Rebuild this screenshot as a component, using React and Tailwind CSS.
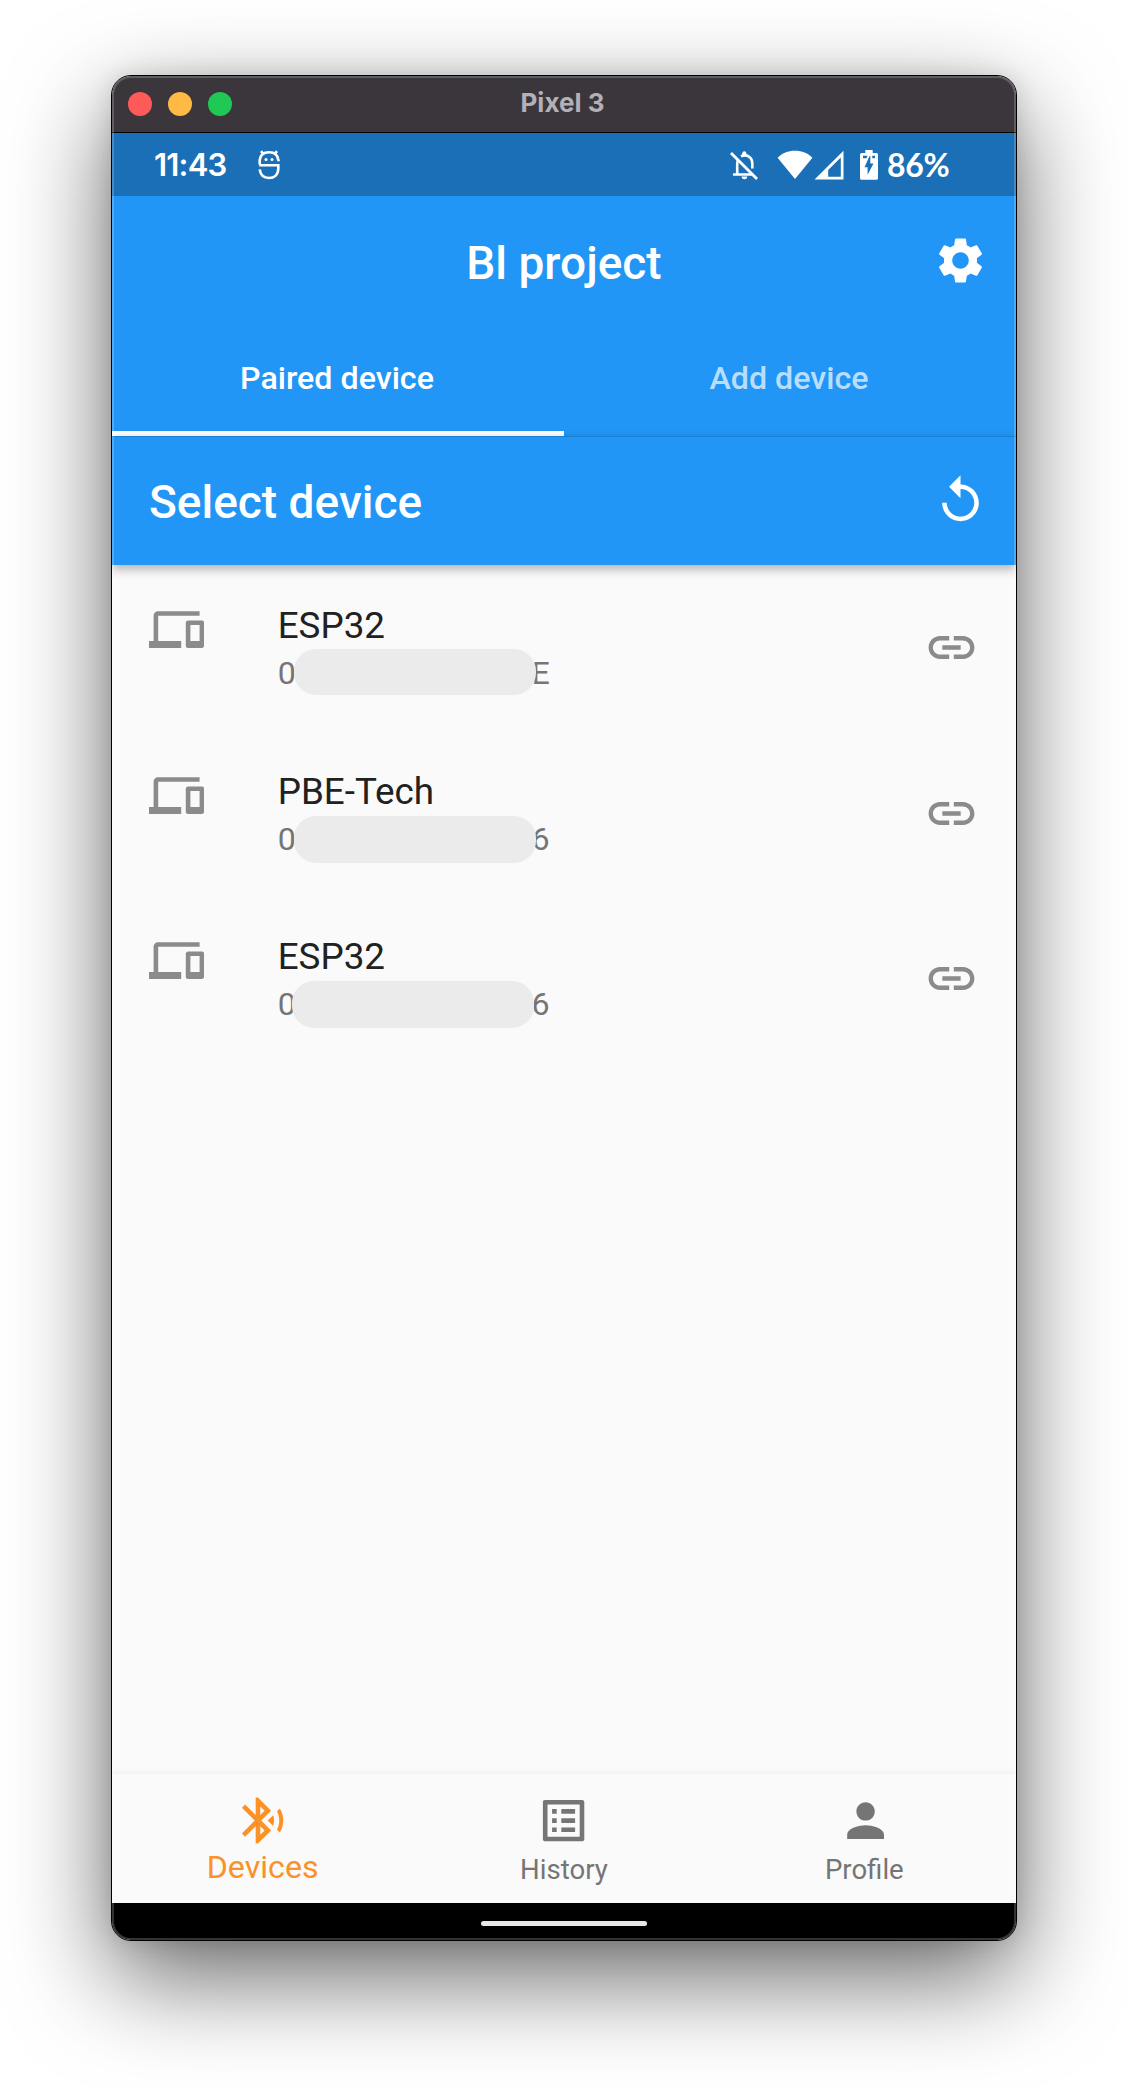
import React from "react";
import {
  MdSettings,
  MdReplay,
  MdDevices,
  MdLink,
  MdBluetoothSearching,
  MdListAlt,
  MdPerson,
} from "react-icons/md";

const devices = [
  { name: "ESP32", first: "0", last: "E", mask: "left-[16.5px] top-[1px] h-[46px]" },
  { name: "PBE-Tech", first: "0", last: "6", mask: "left-[16.5px] top-[2.5px] h-[46.5px]" },
  { name: "ESP32", first: "0", last: "6", mask: "left-[14.5px] top-[2px] h-[46.5px]" },
];

function FaceIcon() {
  return (
    <svg className="ml-8 h-[30px] w-[22px]" viewBox="0 0 22 30" fill="none" stroke="white" strokeWidth="2.6">
      <path d="M1.7 14.5V10Q2.5 2.3 11 2.2T20.3 10M3 1.2l2.5 3M19 1.2l-2.5 3M1.2 15.3H20.3V19C20 25 16 28 11 28S2.5 25 1.7 19.4" />
      <path d="M20.5 9.5v1.8" />
      <circle cx="8" cy="9.6" r="1.5" fill="white" stroke="none" />
      <circle cx="14" cy="9.6" r="1.5" fill="white" stroke="none" />
    </svg>
  );
}

function BellOffIcon() {
  return (
    <svg className="h-[30px] w-[30px]" viewBox="0 0 30 30" fill="none" stroke="white" strokeWidth="2.6">
      <path d="M2 3L28 29" strokeWidth="2.8" />
      <path d="M4 24.5H23.5M8.2 24V14c0-1.8.3-3 .9-4.2M12 6.3c6-2.6 11.3 1.2 11.3 7.2V18.5" />
      <path d="M13.3 5V3.3a2 2 0 0 1 4 0V5z" fill="white" stroke="none" />
      <path d="M12.6 26.5h5.6a2.8 2.8 0 0 1-5.6 0z" fill="white" stroke="none" />
    </svg>
  );
}

function WifiIcon() {
  return (
    <svg className="ml-[18px] h-[30px] w-[36px]" viewBox="0 0 36 30" fill="white">
      <path d="M18 29L.6 7.8C5 3.4 11 .8 18 .8s13 2.6 17.400 7z" />
    </svg>
  );
}

function SignalIcon() {
  return (
    <svg className="ml-[1px] h-[30px] w-[30px]" viewBox="0 0 30 30" fill="white" fillRule="evenodd">
      <path d="M29.5 .8V29.5H.5zM26.8 7.5L14.2 20V26.8H26.8z" />
    </svg>
  );
}

function BatteryIcon() {
  return (
    <svg className="ml-4 h-[30px] w-[18px]" viewBox="0 0 18 30" fill="white" fillRule="evenodd">
      <path d="M5.3 0h7.4v3H16.5Q18 3 18 4.5V28.3Q18 29.8 16.5 29.8H1.5Q0 29.8 0 28.3V4.5Q0 3 1.5 3H5.3zM9.7 5.8L4.5 17.2H7.6V24.8L13.5 13.6H10.3V5.8zM3 5.8V8.2H6.5L7.5 5.8zM12.3 5.8V8.2H15V5.8z" />
    </svg>
  );
}

function Pill({ className }) {
  return <span className={`absolute w-[242px] rounded-[22px] bg-[#ebebeb] ${className}`} />;
}

export default function App() {
  return (
    <div className="h-[2088px] w-[1128px] overflow-hidden bg-white pl-[111px] pt-[75px] font-[Roboto,sans-serif]">
      <div className="relative flex h-[1866px] w-[906px] flex-col overflow-hidden rounded-[20px] border border-black bg-[#fafafa] shadow-[0_36px_100px_rgba(0,0,0,0.6),0_0_24px_rgba(0,0,0,0.12)]">
        <div className="grid h-[57px] shrink-0 grid-cols-3 items-center border-b border-black bg-[#3a363c] px-4">
          <div className="flex gap-4">
            <span className="size-6 rounded-full bg-[#ff5a5a]" />
            <span className="size-6 rounded-full bg-[#ffba45]" />
            <span className="size-6 rounded-full bg-[#20c954]" />
          </div>
          <div className="-mt-[3px] pr-[3px] text-center font-[Inter,sans-serif] text-[26px] font-bold leading-none text-[#b4b0b8]">
            Pixel 3
          </div>
        </div>

        <div className="flex h-[63px] shrink-0 items-center bg-[#1a6fb6] pl-[42px] pr-[67px] font-[Lato,sans-serif] text-white">
          <span className="w-[72px] whitespace-nowrap font-[Inter,sans-serif] text-[31px] font-semibold leading-none tracking-[-0.8px]">
            11:43
          </span>
          <FaceIcon />
          <div className="ml-auto flex items-center">
            <BellOffIcon />
            <WifiIcon />
            <SignalIcon />
            <BatteryIcon />
            <span className="ml-[9px] w-[62px] whitespace-nowrap text-[32px] font-bold leading-none tracking-[-0.3px]">86%</span>
          </div>
        </div>

        <header className="grid h-[129px] shrink-0 grid-cols-3 items-center bg-[#2196f6] text-white">
          <h1 className="col-start-2 pt-1 text-center text-[46px] font-medium leading-none">Bl project</h1>
          <MdSettings className="mr-7 justify-self-end text-[55px]" />
        </header>

        <nav className="grid h-[111px] shrink-0 grid-cols-2 bg-[#2196f6] text-center text-[32.2px] font-medium leading-none text-white">
          <div className="border-b-[5px] border-white pt-[37px] pr-[2px]">Paired device</div>
          <div className="pt-[37px] pr-[2px] text-white/70">Add device</div>
        </nav>

        <div className="z-10 flex h-[129px] shrink-0 items-center justify-between border-t border-[#1b7fd2] bg-[#2196f6] pl-[37px] pr-7 text-white shadow-[0_4px_10px_rgba(0,0,0,0.3)]">
          <h2 className="pt-px text-[46px] font-medium leading-none">Select device</h2>
          <MdReplay className="-mt-px text-[55px]" />
        </div>

        <ul className="flex-1">
          {devices.map((d, i) => (
            <li key={i} className="flex h-[165.7px] items-start pl-[37px] pr-[37px]">
              <MdDevices className="mt-[37px] text-[55.2px] text-[#8b8b8b]" />
              <div className="ml-[73.5px] pt-[38px]">
                <div className="h-[45px] text-[36.8px] leading-[46px] text-[#212121]">{d.name}</div>
                <div className="relative flex w-[272px] justify-between text-[32.2px] leading-[50px] text-[#757575]">
                  <span>{d.first}</span>
                  <span>{d.last}</span>
                  <Pill className={d.mask} />
                </div>
              </div>
              <MdLink className="ml-auto mt-[55px] text-[55px] text-[#8b8b8b]" />
            </li>
          ))}
        </ul>

        <nav className="grid h-[129px] shrink-0 grid-cols-3 bg-[#fafafa] pt-[19px] text-[27.6px] leading-8 text-[#757575] shadow-[0_-1px_6px_rgba(0,0,0,0.06)]">
          <div className="flex flex-col items-center text-[32.2px] text-[#fb9127]">
            <MdBluetoothSearching className="text-[55.2px]" />
            <span className="mt-[3px]">Devices</span>
          </div>
          <div className="flex flex-col items-center">
            <MdListAlt className="text-[55.2px]" />
            <span className="mt-[6px]">History</span>
          </div>
          <div className="flex flex-col items-center">
            <MdPerson className="text-[55.2px]" />
            <span className="mt-[6px] pr-[2px]">Profile</span>
          </div>
        </nav>

        <div className="flex h-[37px] shrink-0 justify-center bg-black pt-[18px]">
          <span className="h-[5px] w-[166px] rounded-full bg-[#e8e8e8]" />
        </div>
        <div className="pointer-events-none absolute inset-0 z-20 rounded-[19px] border-2 border-white/20" />
      </div>
    </div>
  );
}
